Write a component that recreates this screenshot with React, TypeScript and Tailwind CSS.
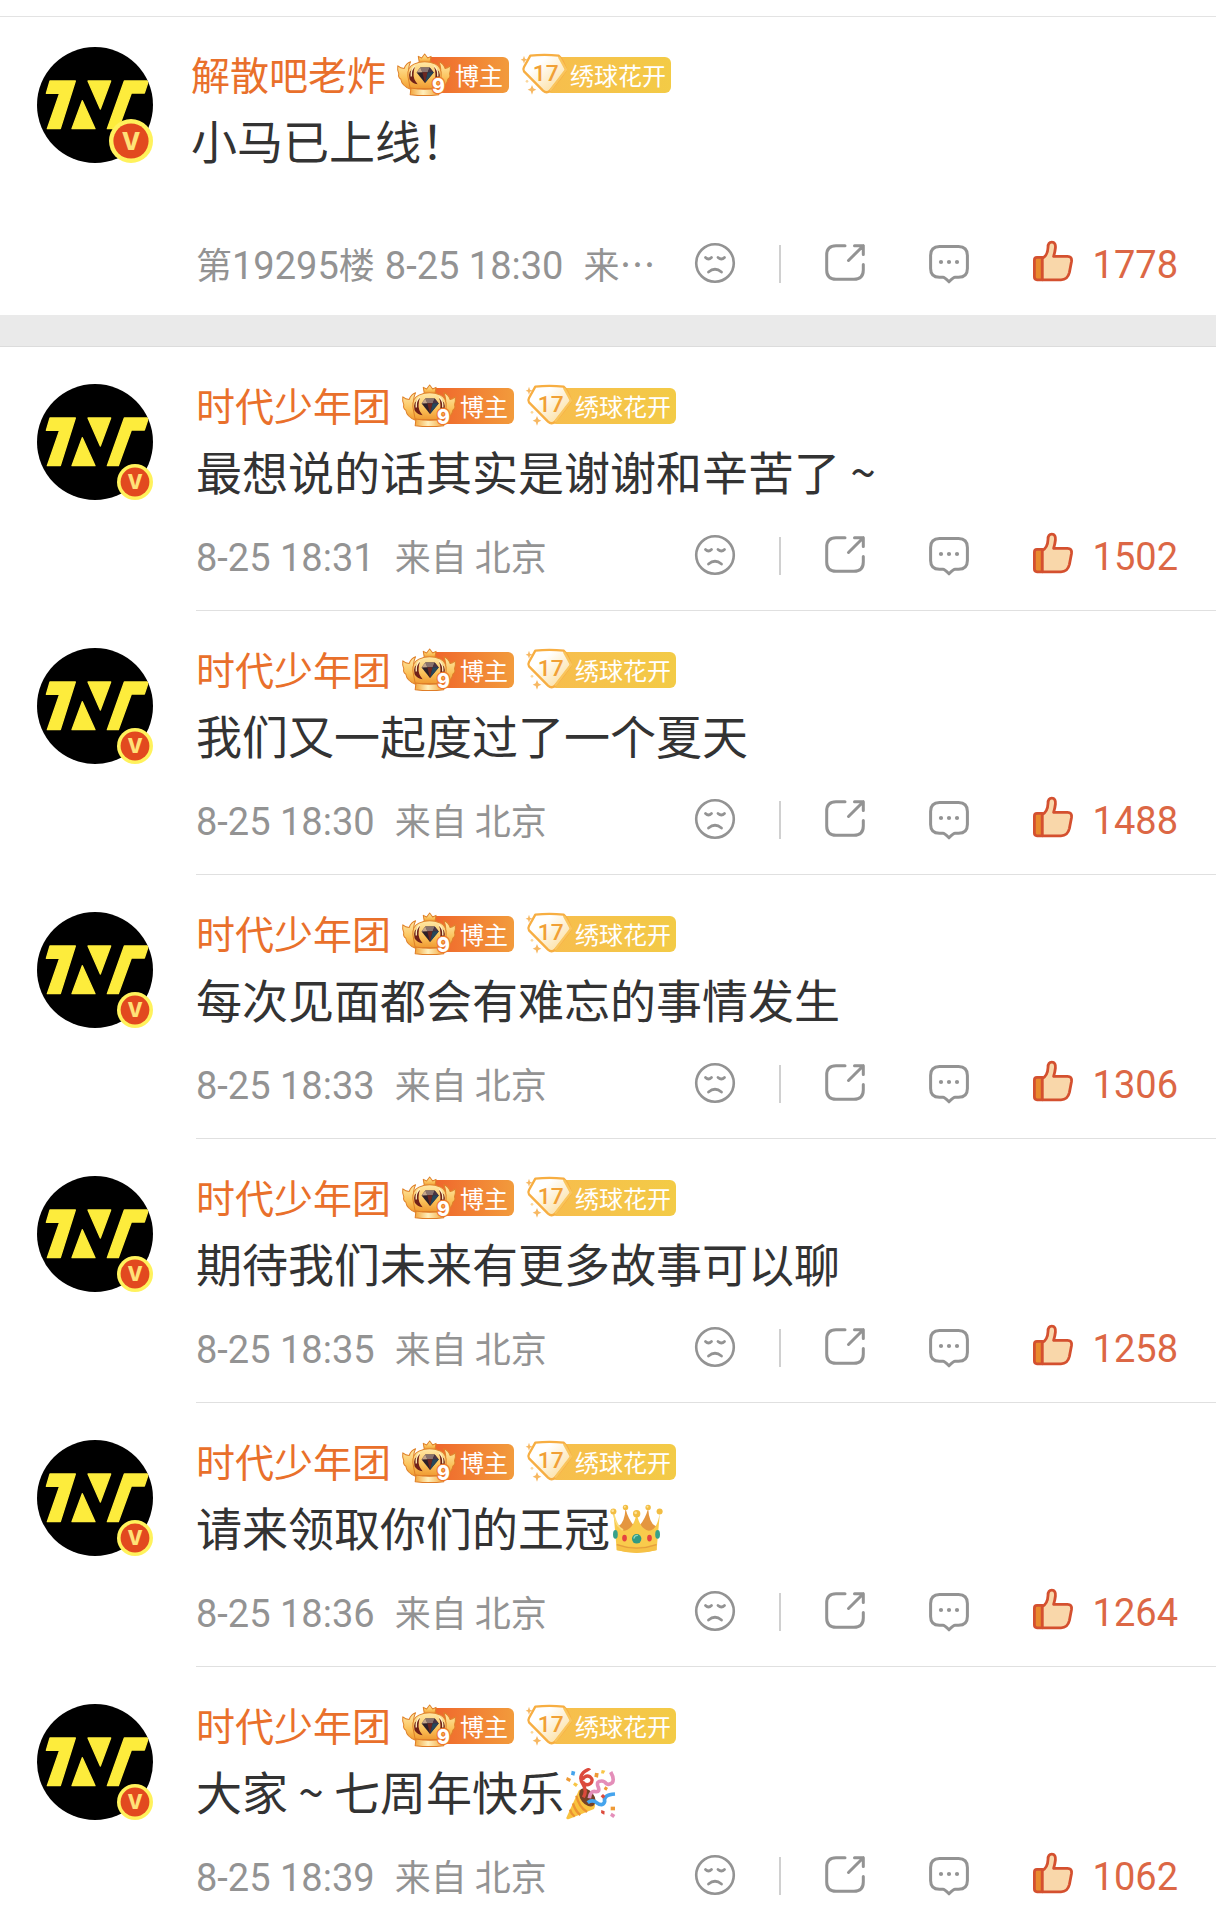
import type { ReactNode } from 'react';

type Sticker = 'crown' | 'party';

interface Comment {
  id: number;
  name: string;
  text: string;
  sticker?: Sticker;
  floor?: string;
  date: string;
  source: string;
  likes: number;
}

const pinned: Comment = {
  id: 0,
  name: '解散吧老炸',
  text: '小马已上线！',
  floor: '19295',
  date: '8-25 18:30',
  source: '来…',
  likes: 1778,
};

const comments: Comment[] = [
  { id: 1, name: '时代少年团', text: '最想说的话其实是谢谢和辛苦了~', date: '8-25 18:31', source: '来自 北京', likes: 1502 },
  { id: 2, name: '时代少年团', text: '我们又一起度过了一个夏天', date: '8-25 18:30', source: '来自 北京', likes: 1488 },
  { id: 3, name: '时代少年团', text: '每次见面都会有难忘的事情发生', date: '8-25 18:33', source: '来自 北京', likes: 1306 },
  { id: 4, name: '时代少年团', text: '期待我们未来有更多故事可以聊', date: '8-25 18:35', source: '来自 北京', likes: 1258 },
  { id: 5, name: '时代少年团', text: '请来领取你们的王冠', sticker: 'crown', date: '8-25 18:36', source: '来自 北京', likes: 1264 },
  { id: 6, name: '时代少年团', text: '大家~七周年快乐', sticker: 'party', date: '8-25 18:39', source: '来自 北京', likes: 1062 },
];

function Avatar({ large }: { large?: boolean }) {
  return (
    <div className="relative h-[116px] w-[116px] shrink-0">
      <svg viewBox="22 42 348 348" className="h-full w-full">
        <clipPath id="avatar-clip">
          <circle cx="196" cy="216" r="174" />
        </clipPath>
        <g clipPath="url(#avatar-clip)">
          <rect x="22" y="42" width="348" height="348" fill="#000" />
          <g fill="#fdec3c" stroke="#fdec3c" strokeWidth="4" strokeLinejoin="round">
            <path d="M61 144H137L92 287H53L90 181H50Z" />
            <path d="M158 203L127 287H196Z" />
            <path d="M175 144H243L212 228Z" />
            <path d="M284 144H356L344 180H305L266 287H233Z" />
          </g>
        </g>
      </svg>
      {/* verified mark */}
      <svg
        viewBox="0 0 40 40"
        className={large ? 'absolute right-0 bottom-0 h-11 w-11' : 'absolute right-0 bottom-0 h-9 w-9'}
      >
        <circle cx="20" cy="20" r="20" fill="#fff25c" />
        <circle cx="20" cy="20" r="16" fill="#e2491f" />
        <text x="20" y="28" textAnchor="middle" fontFamily="Inter, sans-serif" fontWeight="800" fontSize="22" fill="#ffe178">
          V
        </text>
      </svg>
    </div>
  );
}

function OwnerBadge() {
  return (
    <span className="relative mt-1 flex shrink-0">
      <span className="ml-6 h-9 rounded-md bg-gradient-to-r from-[#ee5f2a] to-[#f29b3c] pl-[34px] pr-[6px] text-[24px] leading-9 text-white">
        博主
      </span>
      <svg viewBox="38 12 160 128" className="absolute -top-1 left-0 h-[43px] w-[54px] overflow-visible">
        <defs>
          <linearGradient id="crown-gold" x1="0" y1="0" x2="0" y2="1">
            <stop offset="0" stopColor="#ffe9a8" />
            <stop offset="0.6" stopColor="#fbc25a" />
            <stop offset="1" stopColor="#f09a32" />
          </linearGradient>
          <linearGradient id="crown-band" x1="0" y1="0" x2="1" y2="0">
            <stop offset="0" stopColor="#f3a53c" />
            <stop offset="0.45" stopColor="#fff0bd" />
            <stop offset="1" stopColor="#f3a53c" />
          </linearGradient>
        </defs>
        <g fill="url(#crown-gold)" stroke="#df8129" strokeWidth="3" strokeLinejoin="round">
          <path d="M40 50Q48 57 59 58Q65 42 78 38Q68 58 75 84L78 120Q52 110 49 90Q40 84 43 74Q38 62 40 50Z" />
          <path d="M196 50Q188 57 181 58Q175 42 162 38Q172 58 165 84L162 120Q186 110 189 90Q198 84 194 74Q198 62 196 50Z" />
          <path d="M104 40L101 22L111 27L120 15L129 27L139 22L136 40Z" />
          <path d="M77 118L70 80Q68 54 88 45Q120 31 152 45Q171 54 169 80L163 118Z" />
        </g>
        <path d="M91 54Q68 66 75 90Q83 104 99 105Q85 89 87 74Q87 63 91 54Z" fill="#702119" />
        <path d="M148 54Q170 66 164 90Q157 104 141 105Q154 89 152 74Q152 63 148 54Z" fill="#702119" />
        <path d="M91 50Q78 62 80 82M148 50Q161 62 159 82" fill="none" stroke="#fff1bd" strokeWidth="4" />
        <path d="M107 55H135L147 70L121 101L96 70Z" fill="#2d2028" />
        <path d="M107 55H135L129 69H113Z" fill="#89736e" />
        <path d="M96 70L107 55L113 69Z" fill="#c6a68a" />
        <path d="M147 70L135 55L129 69Z" fill="#493444" />
        <path d="M113 69H129L121 101Z" fill="#6d2720" />
        <path d="M129 69H147L121 101Z" fill="#26475b" />
        <path d="M79 116Q120 124 162 116V136Q120 141 77 136Z" fill="url(#crown-band)" stroke="#df7d27" strokeWidth="3" />
        <text
          x="161"
          y="132"
          textAnchor="middle"
          fontFamily="Inter, sans-serif"
          fontWeight="800"
          fontSize="58"
          fill="#fff"
          stroke="#ee7a2c"
          strokeWidth="7"
          paintOrder="stroke"
        >
          9
        </text>
      </svg>
    </span>
  );
}

function FanBadge() {
  return (
    <span className="relative mt-1 flex shrink-0">
      <span className="ml-6 h-9 rounded-md bg-gradient-to-r from-[#f7bd4d] to-[#f3cb46] pl-[25px] pr-[5px] text-[24px] leading-9 text-white">
        绣球花开
      </span>
      <svg viewBox="440 44 144 126" className="absolute -top-1 left-0 h-[42px] w-12 overflow-visible">
        <defs>
          <linearGradient id="gem-fill" x1="0" y1="0" x2="1" y2="1">
            <stop offset="0.3" stopColor="#fff" />
            <stop offset="1" stopColor="#fbd88b" />
          </linearGradient>
        </defs>
        <path
          d="M468 52Q510 47 553 52Q564 61 575 94Q575 99 527 157Q517 167 506 157L449 99Q445 93 449 86Z"
          fill="url(#gem-fill)"
          stroke="#f7ae42"
          strokeWidth="7"
          strokeLinejoin="round"
        />
        <path d="M554 56L575 94L527 157" fill="none" stroke="#f9c55d" strokeWidth="7" strokeLinejoin="round" />
        <path d="M449 52L452 61L460 64L452 67L449 76L446 67L439 64L446 61Z" fill="#f7b862" />
        <path d="M473 140L477 150L486 154L477 158L473 169L469 158L460 154L469 150Z" fill="#f7b862" />
        <circle cx="458" cy="129" r="4" fill="#fbd79c" />
        <text x="514" y="129" textAnchor="middle" fontFamily="Roboto, sans-serif" fontWeight="500" fontSize="68" fill="#f1a035">
          17
        </text>
      </svg>
    </span>
  );
}

function CrownSticker() {
  return (
    <svg viewBox="97 75 157 148" className="inline-block h-[50px] w-[53px] align-[-8px]" role="img" aria-label="王冠">
      <path d="M118 142Q140 135 143 88Q152 125 176 148Q200 125 210 88Q213 135 236 142L224 165H130Z" fill="#e4963f" />
      <path
        d="M107 98Q115 154 140 154Q166 150 176 104Q186 150 212 154Q237 154 245 98L235 212Q176 226 117 212Z"
        fill="#f9cb4c"
      />
      <path d="M106 98Q117 146 136 152" fill="none" stroke="#fbdc78" strokeWidth="5" />
      <g fill="#f2bd43">
        <circle cx="143" cy="85" r="8" />
        <circle cx="210" cy="85" r="8" />
        <circle cx="107" cy="97" r="9" />
        <circle cx="244" cy="97" r="9" />
        <circle cx="176" cy="104" r="11" />
      </g>
      <g fill="#ffe495">
        <circle cx="141" cy="83" r="3" />
        <circle cx="208" cy="83" r="3" />
        <circle cx="105" cy="95" r="4" />
        <circle cx="173" cy="101" r="4" />
      </g>
      <path d="M117 193Q176 213 235 193V211Q176 229 117 211Z" fill="#f6c146" />
      <path d="M117 195Q176 216 235 195" fill="none" stroke="#e59f3c" strokeWidth="4" />
      <ellipse cx="113" cy="165" rx="7" ry="13" fill="#38a18b" />
      <ellipse cx="238" cy="165" rx="7" ry="13" fill="#38a18b" />
      <ellipse cx="140" cy="176" rx="7" ry="10" fill="#e5443f" />
      <ellipse cx="214" cy="176" rx="7" ry="10" fill="#e5443f" />
      <circle cx="176" cy="178" r="14" fill="#319a83" />
      <path d="M168 176Q170 168 178 168" fill="none" stroke="#8bd8c5" strokeWidth="4" strokeLinecap="round" />
    </svg>
  );
}

function PartySticker() {
  return (
    <svg viewBox="84 82 150 156" className="ml-0.5 inline-block h-[52px] w-[50px] align-[-10px]" role="img" aria-label="庆祝">
      <path d="M123 148L85 231Q85 238 93 235L168 205Q178 190 160 165Q140 142 123 148Z" fill="#f9c33f" />
      <path
        d="M115 165Q122 197 147 214M105 188Q111 210 127 223M96 207Q100 221 110 228"
        fill="none"
        stroke="#ec9432"
        strokeWidth="7"
      />
      <ellipse cx="148" cy="170" rx="20" ry="31" transform="rotate(-38 148 170)" fill="#754126" />
      <g fill="none" strokeLinecap="butt">
        <path
          d="M136 170Q148 151 135 131Q121 110 137 95Q151 83 155 89M133 117Q143 101 156 108Q168 118 157 129Q143 138 134 124"
          stroke="#dc4a3c"
          strokeWidth="10"
        />
        <path
          d="M154 173Q157 148 174 153Q187 154 180 137Q174 121 191 121Q200 121 205 129Q214 134 223 126Q230 115 218 94"
          stroke="#e48eb9"
          strokeWidth="11"
        />
        <path d="M149 186Q163 175 176 186Q194 199 200 183Q195 162 231 160" stroke="#45a4ed" strokeWidth="11" />
      </g>
      <g fill="#ef9a35">
        <path d="M87 109L99 115L95 124L84 118Z" />
        <path d="M171 96L182 98L180 111L169 108Z" />
        <path d="M202 137L210 142L205 150L197 145Z" />
        <path d="M218 198H231V209H218Z" />
      </g>
      <g fill="#f8c545">
        <path d="M110 125L120 131L114 139L105 132Z" />
        <path d="M191 88L202 90L197 99L189 98Z" />
      </g>
      <path d="M101 90L112 93L109 105L99 102Z" fill="#45a4ed" />
      <g fill="#dc4a3c">
        <path d="M195 160L202 167L195 174L188 167Z" />
        <path d="M190 208L200 212L199 222L189 217Z" />
      </g>
      <path d="M221 216L232 223L226 232L216 225Z" fill="#e48eb9" />
    </svg>
  );
}

function IconButton({ label, children }: { label: string; children: ReactNode }) {
  return (
    <button type="button" aria-label={label} className="shrink-0 text-[#939393]">
      <svg
        viewBox="0 0 40 40"
        className="block h-10 w-10 overflow-visible"
        fill="none"
        stroke="currentColor"
        strokeWidth="3"
        strokeLinecap="round"
        strokeLinejoin="round"
      >
        {children}
      </svg>
    </button>
  );
}

function Actions({ likes }: { likes: number }) {
  return (
    <div className="flex shrink-0 items-center">
      <IconButton label="踩">
        <circle cx="20" cy="19" r="18.8" strokeWidth="2.6" />
        <path d="M10.5 13.5Q13.5 16.5 16.5 13.5M23 13.5Q26.5 16.5 29.5 13.5M13.5 28Q20 22.5 26.5 28" strokeWidth="2.8" />
      </IconButton>
      <span className="mx-11 h-[38px] w-0.5 bg-[#d0d0d0]" />
      <IconButton label="转发">
        <path d="M20 1.7H11Q1.7 1.7 1.7 11V26Q1.7 35.3 11 35.3H29Q38.3 35.3 38.3 26V20.5" />
        <path d="M29.5 1.7H38.3V10.5M38.3 1.7L23.5 16.5" />
      </IconButton>
      <span className="w-16" />
      <IconButton label="评论">
        <path d="M10.5 2.5H29.5Q38.4 2.5 38.4 11.5V24.5Q38.4 33.3 29.5 33.3H26Q24.5 33.3 20 37.8Q15.5 33.3 14 33.3H10.5Q1.6 33.3 1.6 24.5V11.5Q1.6 2.5 10.5 2.5Z" />
        <g fill="currentColor" stroke="none">
          <circle cx="12" cy="18" r="2.1" />
          <circle cx="20" cy="18" r="2.1" />
          <circle cx="28" cy="18" r="2.1" />
        </g>
      </IconButton>
      <button type="button" aria-label={`赞 ${likes}`} className="ml-16 flex items-center gap-5 text-[#dc6745]">
        <svg
          viewBox="0 1 40 40"
          className="h-10 w-10 overflow-visible"
          stroke="#d4502f"
          strokeWidth="2.8"
          strokeLinejoin="round"
        >
          <path d="M1.4 17Q1.4 14.4 4 14.4H9.3V36.8H4Q1.4 36.8 1.4 34Z" fill="#e88b2e" />
          <path
            d="M9.3 15.5Q14.7 12.5 15 4.5Q15 -0.8 18.8 -0.8Q23 -0.8 22.4 5Q22 9 20.6 13.4H34.5Q39.2 13.4 38.5 18.5L36.4 29.5Q34.6 36.8 28 36.8H9.3Z"
            fill="#f9d7aa"
          />
        </svg>
        <span className="pt-0.5 font-['Roboto','Noto_Sans_CJK_SC',sans-serif] text-[38px] leading-[44px]">{likes}</span>
      </button>
    </div>
  );
}

// the wave dash takes a full character cell, like the characters around it
function CommentText({ text }: { text: string }) {
  return text.split('~').map((part, i) => (
    <span key={i}>
      {i > 0 && <span className="inline-block w-[46px] text-center">~</span>}
      {part}
    </span>
  ));
}

function CommentRow({ comment }: { comment: Comment }) {
  const { floor } = comment;

  return (
    <article className={floor ? 'flex pl-[37px] pt-[30px] pb-[29px]' : 'flex pl-[37px] pt-[37px]'}>
      <Avatar large={!!floor} />
      <div
        className={
          floor
            ? 'ml-[38px] mt-[6px] min-w-0 flex-1'
            : 'ml-[43px] min-w-0 flex-1 border-b border-[#e0e0e0] pb-8'
        }
      >
        <div className="flex h-11 items-start">
          <a href="#" className="mr-[11px] text-[39px] leading-[40px] text-[#e9702b]">
            {comment.name}
          </a>
          <OwnerBadge />
          <span className="w-3" />
          <FanBadge />
        </div>
        <p className="mt-[14px] h-14 text-[46px] leading-[56px] whitespace-nowrap text-[#333]">
          <CommentText text={comment.text} />
          {comment.sticker === 'crown' && <CrownSticker />}
          {comment.sticker === 'party' && <PartySticker />}
        </p>
        <div
          className={
            floor
              ? 'mt-[75px] flex h-11 items-center justify-between pl-[5px] pr-[38px]'
              : 'mt-9 flex h-11 items-center justify-between pr-[38px]'
          }
        >
          <div className="flex min-w-0 items-baseline text-[36px] leading-[44px] whitespace-nowrap text-[#939393]">
            {floor && (
              <span className="mr-[10px]">
                第<span className="font-['Roboto',sans-serif] text-[38px]">{floor}</span>楼
              </span>
            )}
            <time className="font-['Roboto',sans-serif] text-[38px]">{comment.date}</time>
            <span className="ml-5">{comment.source}</span>
          </div>
          <Actions likes={comment.likes} />
        </div>
      </div>
    </article>
  );
}

export default function App() {
  return (
    <main className="w-full overflow-hidden bg-white pt-4 font-['Noto_Sans_CJK_SC',sans-serif]">
      <section className="border-t border-[#e3e3e3]">
        <CommentRow comment={pinned} />
      </section>
      <div className="h-8 border-b border-[#dcdcdc] bg-[#eaeaea]" />
      <section>
        {comments.map((comment) => (
          <CommentRow key={comment.id} comment={comment} />
        ))}
      </section>
    </main>
  );
}
